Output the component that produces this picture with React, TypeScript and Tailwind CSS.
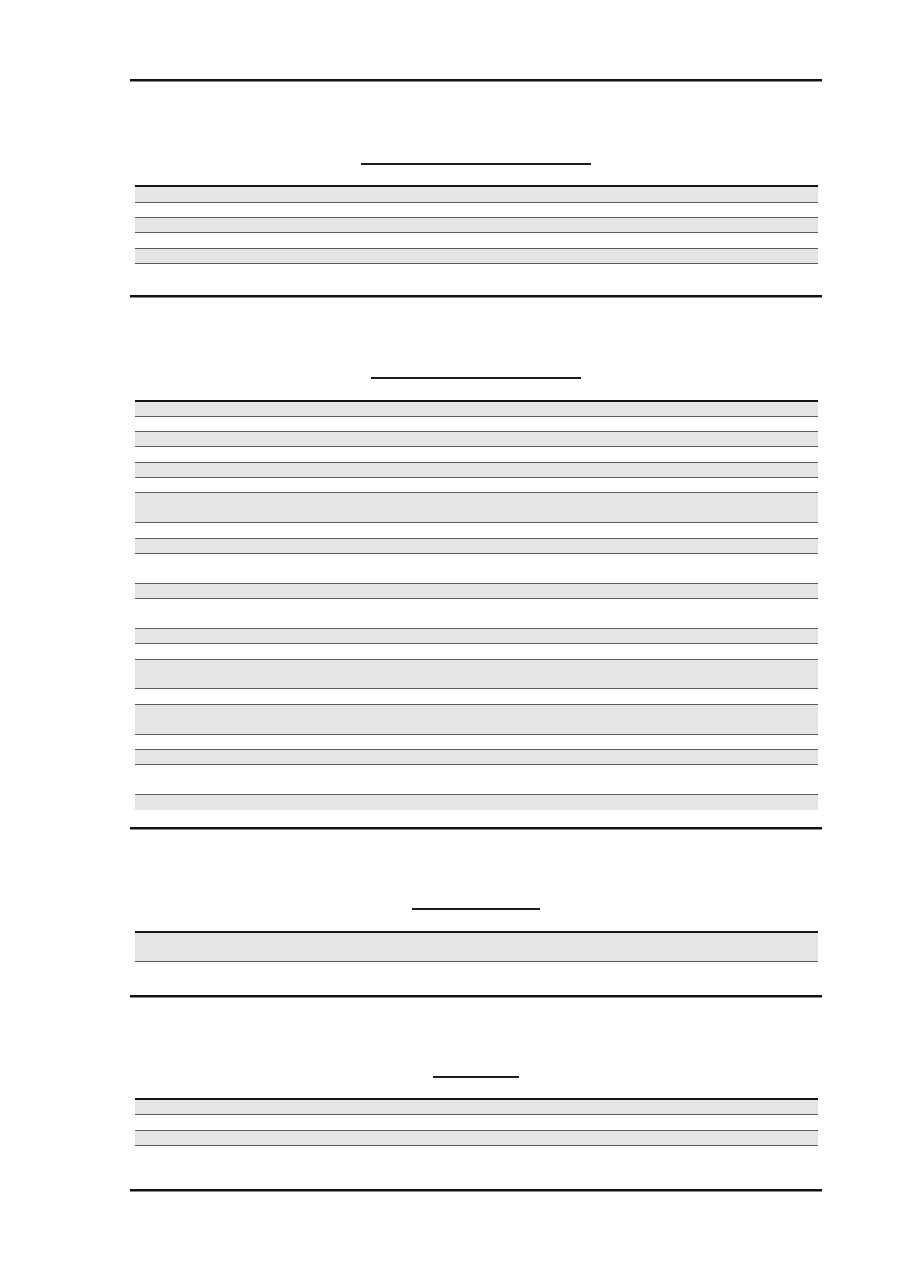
import React from "react";

type Row = { h: string; border?: boolean };

type Section = {
  padTop: string;
  lineW: string;
  gap: string;
  rows: Row[];
  padBottom: string;
};

const r = (h: string, border = true): Row => ({ h, border });

const sections: Section[] = [
  {
    padTop: "pt-[81px]",
    lineW: "w-[230px]",
    gap: "mt-[20px]",
    rows: [r("h-[16px]"), r("h-[15px]"), r("h-[15px]"), r("h-[16px]"), r("h-[15px]")],
    padBottom: "pb-[31px]",
  },
  {
    padTop: "pt-[79px]",
    lineW: "w-[210px]",
    gap: "mt-[21px]",
    rows: [
      r("h-[15px]"),
      r("h-[15px]"),
      r("h-[15px]"),
      r("h-[16px]"),
      r("h-[15px]"),
      r("h-[15px]"),
      r("h-[30px]"),
      r("h-[16px]"),
      r("h-[15px]"),
      r("h-[30px]"),
      r("h-[15px]"),
      r("h-[30px]"),
      r("h-[15px]"),
      r("h-[16px]"),
      r("h-[29px]"),
      r("h-[16px]"),
      r("h-[30px]"),
      r("h-[15px]"),
      r("h-[15px]"),
      r("h-[30px]"),
      r("h-[15px]", false),
    ],
    padBottom: "pb-[17px]",
  },
  {
    padTop: "pt-[78px]",
    lineW: "w-[128px]",
    gap: "mt-[21px]",
    rows: [r("h-[29px]")],
    padBottom: "pb-[33px]",
  },
  {
    padTop: "pt-[78px]",
    lineW: "w-[86px]",
    gap: "mt-[20px]",
    rows: [r("h-[15px]"), r("h-[16px]"), r("h-[15px]")],
    padBottom: "pb-[43px]",
  },
];

function ThickRule() {
  return <div className="h-[3px] w-full border-t-2 border-b border-t-[#141414] border-b-[#8a8a8a]" />;
}

function Block({ s }: { s: Section }) {
  return (
    <section className={"flex flex-col " + s.padBottom}>
      <ThickRule />
      <div className={"flex justify-center " + s.padTop}>
        <div className={"h-[2px] bg-[#1e1e1e] " + s.lineW} />
      </div>
      <div className={"ml-[5px] w-[683px] border-t-2 border-[#151515] flex flex-col " + s.gap}>
        {s.rows.map((row, i) => {
          const gray = i % 2 === 0;
          return (
            <div
              key={i}
              className={
                row.h +
                (gray ? " bg-[#e5e5e5]" : " bg-white") +
                (row.border ? " border-b border-[#5c5c5c]" : "")
              }
            />
          );
        })}
      </div>
    </section>
  );
}

export default function App() {
  return (
    <div className="min-h-[1286px] w-full bg-white pt-[79px] font-['Liberation_Sans',Arial,sans-serif]">
      <div className="ml-[130px] w-[692px] flex flex-col">
        {sections.map((s, i) => (
          <Block key={i} s={s} />
        ))}
        <ThickRule />
      </div>
    </div>
  );
}
